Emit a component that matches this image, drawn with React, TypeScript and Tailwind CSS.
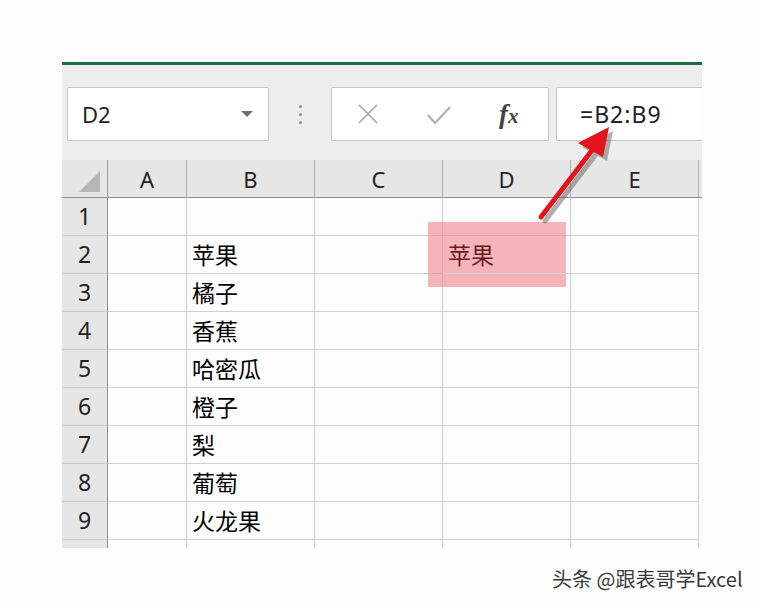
import React from 'react';

const cols = [
  { name: 'A', w: 'w-[79px]' },
  { name: 'B', w: 'w-[128px]' },
  { name: 'C', w: 'w-[128px]' },
  { name: 'D', w: 'w-[128px]' },
  { name: 'E', w: 'w-[128px]' },
];

const fruits = ['', '苹果', '橘子', '香蕉', '哈密瓜', '橙子', '梨', '葡萄', '火龙果'];

const cjk = { fontFamily: '"Noto Sans CJK SC", "Noto Sans", sans-serif' };
const ui = { fontFamily: '"Noto Sans", "Open Sans", sans-serif' };

function Toolbar() {
  return (
    <div className="flex h-[95px] bg-[#eeeeee] pt-[22px] pl-[5px]" style={ui}>
      {/* name box */}
      <div className="flex h-[54px] w-[202px] items-center justify-between rounded-[2px] border border-[#c4c4c4] bg-white pl-[14px] pr-[14px]">
        <span className="text-[22px] text-[#222]">D2</span>
        <svg width="14" height="8" viewBox="0 0 14 8">
          <path d="M1 1 L13 1 L7 7 Z" fill="#707070" />
        </svg>
      </div>
      {/* dots */}
      <div className="flex h-[54px] w-[62px] flex-col items-center justify-center gap-[5px]">
        <span className="h-[3px] w-[3px] rounded-full bg-[#8a8a8a]" />
        <span className="h-[3px] w-[3px] rounded-full bg-[#8a8a8a]" />
        <span className="h-[3px] w-[3px] rounded-full bg-[#8a8a8a]" />
      </div>
      {/* cancel / enter / fx */}
      <div className="relative h-[54px] w-[218px] rounded-[2px] border border-[#c4c4c4] bg-white">
        <svg className="absolute left-[25px] top-[15px]" width="22" height="22" viewBox="0 0 22 22">
          <path d="M2 2 L20 20 M20 2 L2 20" stroke="#a8a8a8" strokeWidth="1.6" fill="none" />
        </svg>
        <svg className="absolute left-[94px] top-[16px]" width="26" height="22" viewBox="0 0 26 22">
          <path d="M2 11 L9 19 L24 3" stroke="#b4b4b4" strokeWidth="2.4" fill="none" strokeLinejoin="round" />
        </svg>
        <span
          className="absolute left-[167px] top-[6px] text-[27px] font-bold italic text-[#444]"
          style={{ fontFamily: '"Liberation Serif", serif' }}
        >
          f<span className="text-[21px]">x</span>
        </span>
      </div>
      {/* formula */}
      <div className="ml-[7px] flex h-[54px] flex-1 items-center rounded-l-[2px] border border-r-0 border-[#c4c4c4] bg-white pl-[23px]">
        <span className="text-[23px] tracking-[1px] text-[#222]">=B2:B9</span>
      </div>
    </div>
  );
}

function HeaderRow() {
  return (
    <div className="flex h-[38px] bg-[#e6e6e6] border-b border-[#8e8e8e]" style={ui}>
      <div className="relative w-[46px] border-r border-[#9a9a9a]">
        <svg className="absolute left-[17px] top-[11px]" width="22" height="21" viewBox="0 0 22 21">
          <path d="M21 0 L21 21 L0 21 Z" fill="#b7b7b7" />
        </svg>
      </div>
      {cols.map((c) => (
        <div
          key={c.name}
          className={`${c.w} flex items-center justify-center border-r border-[#b0b0b0] pt-[2px] text-[22px] text-[#222]`}
        >
          {c.name}
        </div>
      ))}
    </div>
  );
}

function Row({ n, fruit }: { n: number; fruit: string }) {
  return (
    <div className="flex h-[38px]">
      <div
        className="flex w-[46px] items-center justify-center border-r border-b border-r-[#8e8e8e] border-b-[#c8c8c8] bg-[#e6e6e6] text-[23px] text-[#222]"
        style={ui}
      >
        {n}
      </div>
      {cols.map((c) => {
        const selected = c.name === 'D' && n === 2;
        return (
          <div
            key={c.name}
            className={`${c.w} flex items-center border-r border-b border-[#d0d0d0] pl-[5px] text-[23px] ${
              selected ? 'relative z-10 text-[#6e1a1e]' : 'text-black'
            }`}
            style={cjk}
          >
            {c.name === 'B' ? fruit : selected ? '苹果' : ''}
          </div>
        );
      })}
    </div>
  );
}

function Stub() {
  return (
    <div className="flex h-[8px]">
      <div className="w-[46px] border-r border-[#8e8e8e] bg-[#e6e6e6]" />
      {cols.map((c) => (
        <div key={c.name} className={`${c.w} border-r border-[#d0d0d0]`} />
      ))}
    </div>
  );
}

export default function App() {
  return (
    <div className="relative h-[608px] w-[760px] overflow-hidden bg-[#fdfdfd]">
      {/* highlight over D2 */}
      <div className="absolute left-[428px] top-[222px] z-[5] h-[65px] w-[138px] bg-[rgba(239,120,132,0.55)]" />

      <div className="ml-[62px] w-[640px] pt-[62px]">
        <div className="border-t-[3px] border-[#1d6b40]">
          <Toolbar />
          <HeaderRow />
          {fruits.map((f, i) => (
            <Row key={i} n={i + 1} fruit={f} />
          ))}
          <Stub />
        </div>
      </div>

      {/* arrow */}
      <svg className="pointer-events-none absolute left-0 top-0 z-20" width="760" height="608" viewBox="0 0 760 608">
        <g opacity="0.45" transform="translate(4 4)">
          <path d="M541 217 L593 149" stroke="#555" strokeWidth="5" strokeLinecap="round" />
          <path d="M609 127 L578 143 L603 157 Z" fill="#555" />
        </g>
        <path d="M541 217 L593 149" stroke="#e3141b" strokeWidth="5" strokeLinecap="round" />
        <path d="M609 127 L578 143 L603 157 Z" fill="#e3141b" />
      </svg>

      {/* watermark */}
      <div
        className="absolute left-[552px] top-[564px] text-[20px] text-[#3a3a3a]"
        style={{ ...cjk, textShadow: '0 0 2px #fff, 0 0 2px #fff' }}
      >
        头条 @跟表哥学Excel
      </div>
    </div>
  );
}
